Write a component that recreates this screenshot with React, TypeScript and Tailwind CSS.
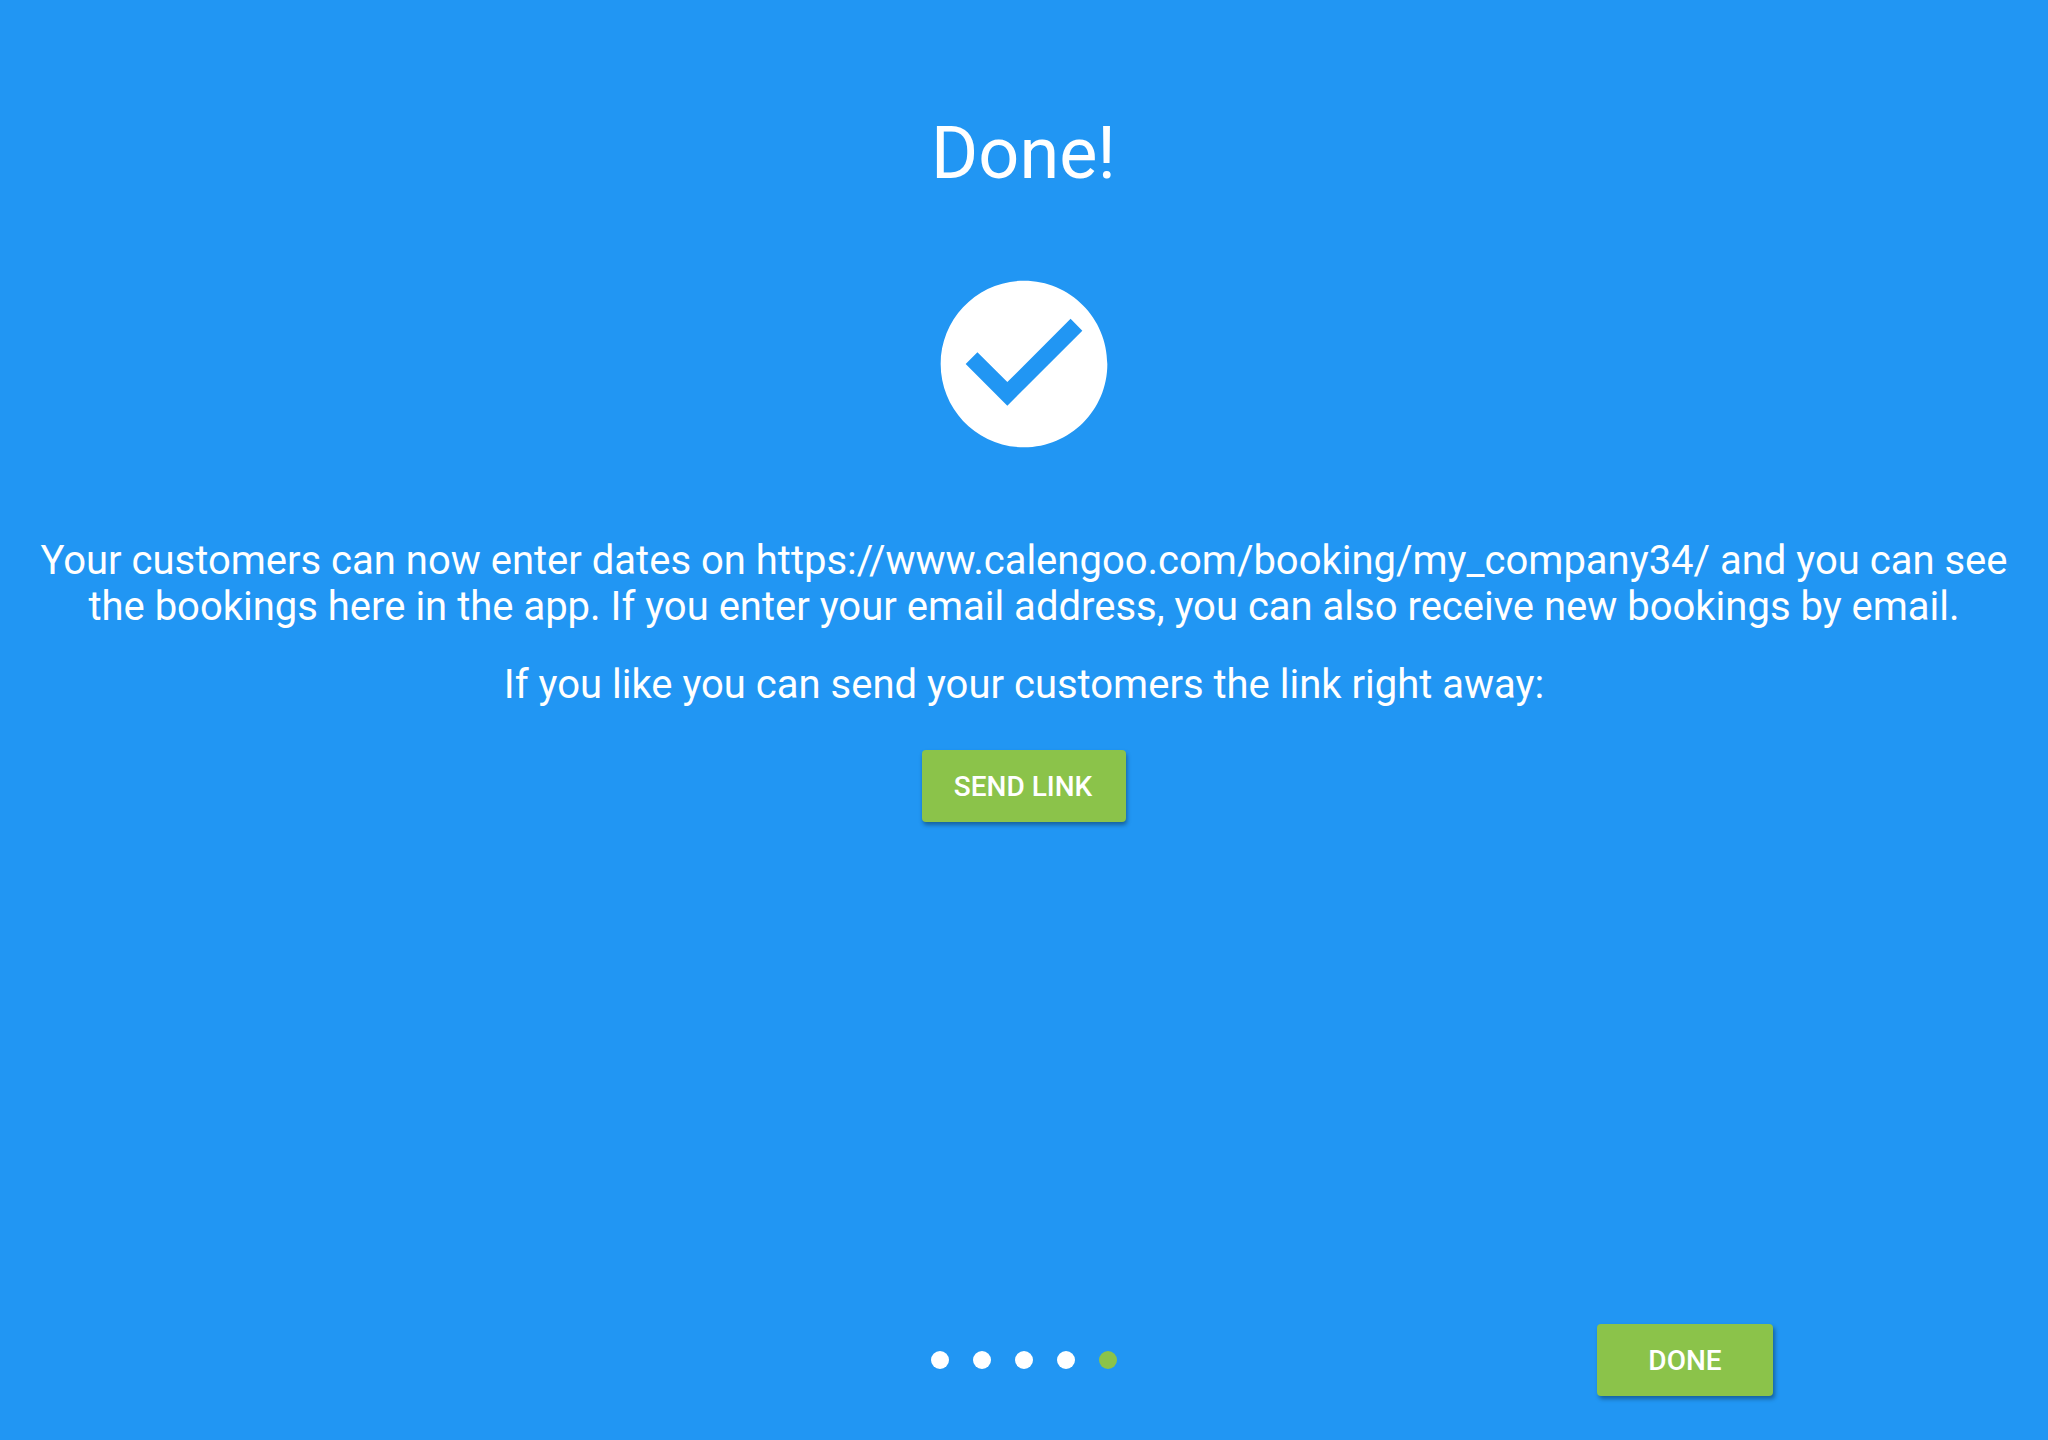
import { MdCheckCircle } from 'react-icons/md';

const STEPS = [0, 1, 2, 3, 4];

export default function App() {
  const currentStep = 4;

  return (
    <div className="flex h-[1440px] w-[2048px] flex-col items-center bg-[#2196f3] font-['Roboto',sans-serif] text-white">
      <h1 className="mt-[112px] pr-px text-[72px] leading-[84px]">Done!</h1>

      <MdCheckCircle className="mt-[68px] h-[200px] w-[200px]" />

      <p className="mt-[74px] text-center text-[40px] leading-[46px]">
        Your customers can now enter dates on https://www.calengoo.com/booking/my_company34/ and you can see
        <br />
        the bookings here in the app. If you enter your email address, you can also receive new bookings by email.
      </p>
      <p className="mt-[32px] text-[40px] leading-[46px]">
        If you like you can send your customers the link right away:
      </p>

      <button className="mt-[42px] h-[72px] w-[204px] rounded-[4px] bg-[#8bc34a] pt-px pr-[2px] text-[28px] font-medium shadow-[1px_3px_4px_rgba(0,0,0,0.35)]">
        SEND LINK
      </button>

      {/* Page indicator and finish button */}
      <div className="mt-auto mb-[44px] grid w-full grid-cols-[1fr_auto_1fr] items-center">
        <div className="col-start-2 flex gap-[24px]">
          {STEPS.map((step) => (
            <span
              key={step}
              className={`h-[18px] w-[18px] rounded-full ${step === currentStep ? 'bg-[#8bc34a]' : 'bg-white'}`}
            />
          ))}
        </div>
        <button className="mr-[275px] h-[72px] w-[176px] justify-self-end rounded-[4px] bg-[#8bc34a] pt-[2px] text-[28px] font-medium shadow-[2px_3px_4px_rgba(0,0,0,0.35)]">
          DONE
        </button>
      </div>
    </div>
  );
}
